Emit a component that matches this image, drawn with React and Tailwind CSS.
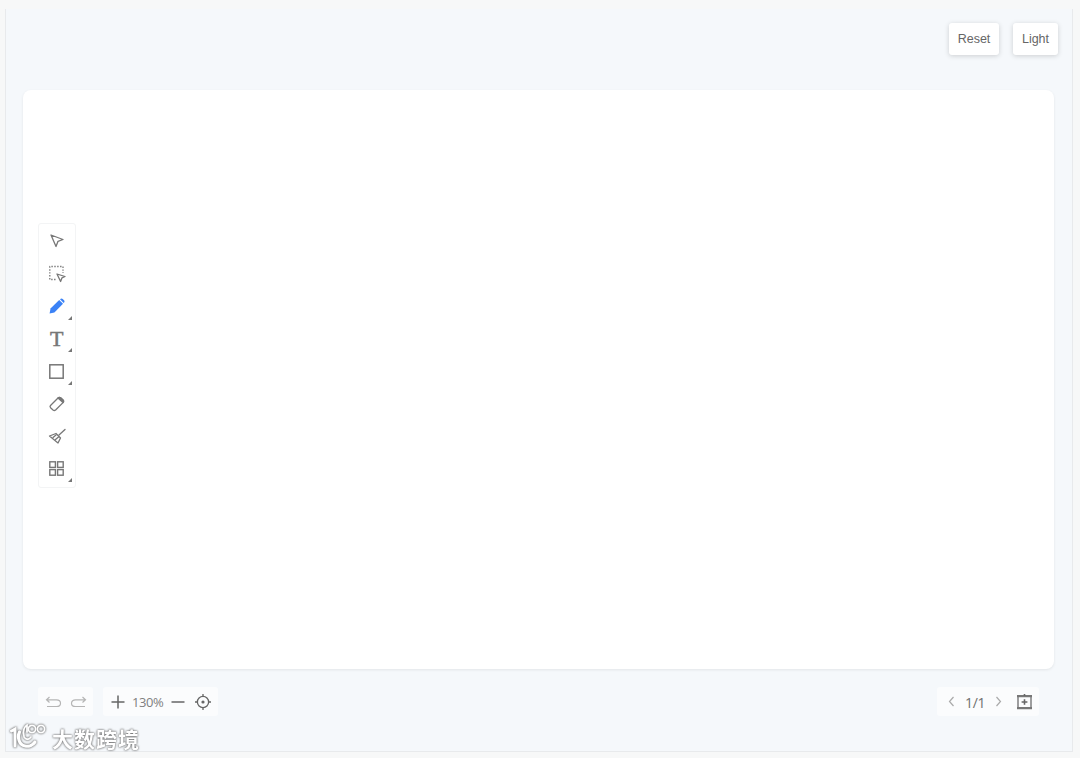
import React from "react";

const ic = "#777";
const Corner = () => (
  <span className="absolute right-[3px] bottom-[3px] w-0 h-0 border-l-[4px] border-l-transparent border-b-[4px] border-b-[#777]" />
);
const Tool = ({ children, corner }) => (
  <div className="relative h-[32.5px] w-full flex items-center justify-center">
    {children}
    {corner && <Corner />}
  </div>
);
const S = ({ children, size = 18, vb = 18 }) => (
  <svg width={size} height={size} viewBox={`0 0 ${vb} ${vb}`} fill="none" stroke={ic} strokeWidth="1.3" strokeLinejoin="round" strokeLinecap="round">
    {children}
  </svg>
);

export default function App() {
  return (
    <div className="w-[1080px] h-[758px] bg-[#f7f8f8] pt-[9px] pl-[5px] overflow-hidden relative" style={{ fontFamily: '"Liberation Sans", Arial, sans-serif' }}>
      <div className="w-[1068px] h-[743px] bg-[#f5f8fb] border-r border-b border-l border-[#e8eaec] flex flex-col">
        <div className="h-[80.5px] flex justify-end items-start pt-[14px] pr-[14px] gap-[14px] shrink-0">
          <button className="h-[32px] w-[50px] bg-white rounded-[3px] shadow-[0_1px_5px_rgba(0,0,0,0.17)] text-[12.5px] text-[#666]">Reset</button>
          <button className="h-[32px] w-[45px] bg-white rounded-[3px] shadow-[0_1px_5px_rgba(0,0,0,0.17)] text-[12.5px] text-[#666]">Light</button>
        </div>
        <div className="relative ml-[17px] w-[1031px] h-[579.5px] bg-white rounded-[8px] shadow-[0_1px_3px_rgba(0,0,0,0.08)] shrink-0">
          <div className="absolute left-[15px] top-[133px] w-[37.5px] h-[265px] bg-white rounded-[3px] border border-[#f3f4f5] pt-[1.5px] flex flex-col">
            <Tool>
              <S><path d="M3 3 L15 7.5 L10 9.3 L8 14.5 Z" /></S>
            </Tool>
            <Tool>
              <S>
                <path d="M7.5 14.5H1.8V1.5H15V8" strokeDasharray="1.4 1.5" strokeLinecap="butt" />
                <path d="M9 9 L17 11.5 L14 12.8 L12.6 16.5 Z" />
              </S>
            </Tool>
            <Tool corner>
              <svg width="16" height="16" viewBox="0 0 16 16" fill="#3b82f6">
                <path d="M.6 15.4 L1.5 10.6 L10.2 2 L14 5.8 L5.4 14.5 Z" />
                <path d="M11.3 1 C12 .3 13 .3 13.7 1 L15 2.3 C15.7 3 15.7 4 15 4.7 L14.7 5 L11 1.3 Z" />
              </svg>
            </Tool>
            <Tool corner>
              <span className="text-[22px] leading-none text-[#777]" style={{ fontFamily: '"Liberation Serif", serif', WebkitTextStroke: "0.5px #777" }}>T</span>
            </Tool>
            <Tool corner>
              <svg width="15" height="15" viewBox="0 0 15 15" fill="none" stroke={ic} strokeWidth="1.5"><rect x=".8" y=".8" width="13.4" height="13.4" /></svg>
            </Tool>
            <Tool>
              <S>
                <path d="M2.5 10.5 L10 3 C10.8 2.2 11.8 2.2 12.6 2.8 L15 5 C15.8 5.8 15.8 6.8 15 7.6 L7.6 15 C6.8 15.6 5.8 15.6 5 15 L2.6 12.8 C1.9 12.1 1.9 11.2 2.5 10.5 Z" />
                <path d="M10 3 L15 7.6 C15.8 6.8 15.8 5.8 15 5 L12.6 2.8 C11.8 2.2 10.8 2.2 10 3 Z" fill={ic} />
              </S>
            </Tool>
            <Tool>
              <S>
                <path d="M11 8 L17 2.5" />
                <path d="M8 6.5 L12.5 11 L10 16 L1.5 9 Z" />
                <path d="M5 10.5 L8 8 M7.5 12.5 L10.5 10" />
              </S>
            </Tool>
            <Tool corner>
              <svg width="15" height="15" viewBox="0 0 15 15" fill="none" stroke={ic} strokeWidth="1.4">
                <rect x=".8" y=".8" width="5.6" height="5.6" /><rect x="8.6" y=".8" width="5.6" height="5.6" />
                <rect x=".8" y="8.6" width="5.6" height="5.6" /><rect x="8.6" y="8.6" width="5.6" height="5.6" />
              </svg>
            </Tool>
          </div>
        </div>
        <div className="flex items-start pt-[18px] pl-[32px] pr-[33px] gap-[10px]">
          <div className="h-[29px] w-[55px] bg-[#fbfcfd] rounded-[3px] flex items-center justify-center gap-[8px]">
            <svg width="17" height="12" viewBox="0 0 17 12" fill="none" stroke="#b5b5b5" strokeWidth="1.2"><path d="M4.5 1 L1.5 3.8 L4.5 6.5 M1.5 3.8 H11.5 C13.8 3.8 15.5 5.2 15.5 7.2 C15.5 9.2 13.8 10.5 11.5 10.5 H2" /></svg>
            <svg width="17" height="12" viewBox="0 0 17 12" fill="none" stroke="#b5b5b5" strokeWidth="1.2"><path d="M12.5 1 L15.5 3.8 L12.5 6.5 M15.5 3.8 H5.5 C3.2 3.8 1.5 5.2 1.5 7.2 C1.5 9.2 3.2 10.5 5.5 10.5 H15" /></svg>
          </div>
          <div className="h-[29px] w-[115px] bg-[#fbfcfd] rounded-[3px] flex items-center pl-[8px]">
            <svg width="14" height="14" viewBox="0 0 14 14" stroke="#666" strokeWidth="1.5"><path d="M7 .5V13.5M.5 7H13.5" /></svg>
            <span className="ml-[7px] mt-[2px] w-[31px] text-[13px] text-[#808080] whitespace-nowrap" style={{ fontFamily: '"Open Sans", sans-serif', letterSpacing: "-0.4px" }}>130%</span>
            <svg className="ml-[8px]" width="14" height="14" viewBox="0 0 14 14" stroke="#666" strokeWidth="1.5"><path d="M.5 7H13.5" /></svg>
            <svg className="ml-[10px]" width="16" height="16" viewBox="0 0 16 16" fill="none" stroke="#666" strokeWidth="1.3">
              <circle cx="8" cy="8" r="5.6" /><path d="M8 0V2.5M8 13.5V16M0 8H2.5M13.5 8H16" /><circle cx="8" cy="8" r="1.6" fill="#666" stroke="none" />
            </svg>
          </div>
          <div className="ml-auto h-[29px] w-[102px] bg-[#fbfcfd] rounded-[3px] flex items-center pl-[11px]">
            <svg width="7" height="11" viewBox="0 0 7 11" fill="none" stroke="#aaa" strokeWidth="1.2"><path d="M5.5 1 L1.5 5.5 L5.5 10" /></svg>
            <span className="ml-[10px] mt-[2px] w-[21px] text-[14px] text-[#707070] whitespace-nowrap" style={{ fontFamily: '"Open Sans", sans-serif', letterSpacing: "-0.3px" }}>1/1</span>
            <svg className="ml-[9px]" width="7" height="11" viewBox="0 0 7 11" fill="none" stroke="#aaa" strokeWidth="1.2"><path d="M1.5 1 L5.5 5.5 L1.5 10" /></svg>
            <svg className="ml-[15px]" width="15" height="16" viewBox="0 0 15 16" fill="none" stroke="#777" strokeWidth="1.4">
              <path d="M0 2.2H15M0 14.2H15" strokeWidth="2.2" /><path d="M1 2V14M14 2V14" /><path d="M7.5 0V2M4.6 8H10.4M7.5 5.2V10.8" strokeWidth="1.6" stroke="#666" />
            </svg>
          </div>
        </div>
      </div>
      <div className="absolute left-[10px] top-[722px] flex items-center" style={{ filter: "drop-shadow(0 0 1px rgba(80,80,80,0.8)) drop-shadow(0 0 0.5px rgba(80,80,80,0.5))" }}>
        <svg width="41" height="28" viewBox="0 0 41 28" fill="none" stroke="#fff" strokeLinecap="round">
          <path d="M1.5 9 L5 7 V24" strokeWidth="3" />
          <path d="M9.5 10 C7 15 9 23 15 24 C19 25 23 23 25 20" strokeWidth="3.2" />
          <path d="M14 14 C12 9 15 4 17 3 V10" strokeWidth="1.8" />
          <circle cx="22" cy="7" r="3.6" strokeWidth="1.8" /><circle cx="31" cy="7" r="3.6" strokeWidth="1.8" />
          <path d="M14 15 C16 18 19 18 21 15" strokeWidth="1.8" />
        </svg>
        <span className="ml-[1px] mt-[5px] text-[21px] leading-none text-white font-bold tracking-[1px] whitespace-nowrap" style={{ fontFamily: '"Noto Sans CJK SC", sans-serif' }}>大数跨境</span>
      </div>
    </div>
  );
}
